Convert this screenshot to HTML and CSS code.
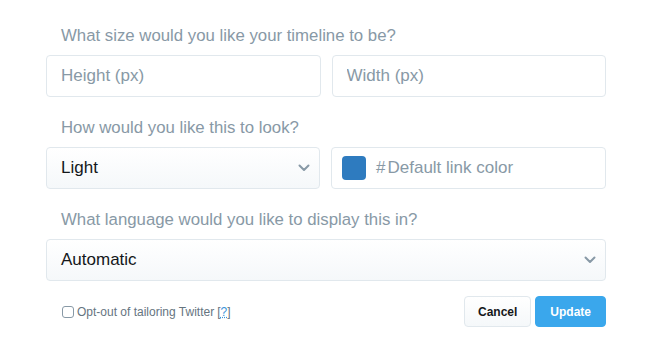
FILE: index.html
```html
<!DOCTYPE html>
<html lang="en">
<head>
    <meta charset="UTF-8">
    <title>Embed timeline options</title>
    <link rel="stylesheet" href="styles.css">
</head>
<body>
<div class="form">
    <div class="label">What size would you like your timeline to be?</div>
    <div class="row">
        <input class="field" type="text" placeholder="Height (px)"/>
        <input class="field" type="text" placeholder="Width (px)"/>
    </div>

    <div class="label">How would you like this to look?</div>
    <div class="row">
        <div class="select">
            <span>Light</span>
            <svg class="chevron" width="12" height="8" viewBox="0 0 12 8"><path d="M1.5 1.5 L6 6 L10.5 1.5" fill="none" stroke="#8899a6" stroke-width="2" stroke-linecap="round" stroke-linejoin="round"/></svg>
        </div>
        <div class="field color">
            <span class="swatch"></span>
            <span class="hash">#</span>
            <span class="ph">Default link color</span>
        </div>
    </div>

    <div class="label">What language would you like to display this in?</div>
    <div class="select wide">
        <span>Automatic</span>
        <svg class="chevron" width="12" height="8" viewBox="0 0 12 8"><path d="M1.5 1.5 L6 6 L10.5 1.5" fill="none" stroke="#8899a6" stroke-width="2" stroke-linecap="round" stroke-linejoin="round"/></svg>
    </div>

    <div class="footer">
        <label class="optout"><span class="box"></span>Opt-out of tailoring Twitter <span class="help">[<u>?</u>]</span></label>
        <div class="buttons">
            <button class="btn cancel">Cancel</button>
            <button class="btn update">Update</button>
        </div>
    </div>
</div>
</body>
</html>
```

FILE: styles.css
```css
body {
    margin: 0;
    background: #fff;
    font-family: "Liberation Sans", Arial, sans-serif;
}

.form {
    width: 560px;
    margin-left: 46px;
    padding-top: 26px;
}

.label {
    font-size: 16.8px;
    line-height: 20px;
    color: #8899a6;
    padding-left: 15px;
    margin-bottom: 9px;
}

.row {
    display: flex;
    gap: 11px;
    margin-bottom: 21px;
}

.field {
    box-sizing: border-box;
    flex: 1 1 0;
    min-width: 0;
    height: 42px;
    border: 1px solid #e1e8ed;
    border-radius: 4px;
    padding: 0 14px;
    font-family: inherit;
    font-size: 17px;
    color: #14171a;
    background: #fff;
}

.field::placeholder {
    color: #8899a6;
}

.color {
    display: flex;
    align-items: center;
    padding-left: 10px;
}

.swatch {
    width: 24px;
    height: 24px;
    border-radius: 4px;
    background: #2e7bbf;
    margin-right: 10px;
}

.hash {
    color: #8899a6;
    margin-right: 2px;
}

.ph {
    color: #8899a6;
}

.select {
    box-sizing: border-box;
    flex: 1 1 0;
    min-width: 0;
    height: 42px;
    border: 1px solid #e1e8ed;
    border-radius: 4px;
    padding: 0 9px 0 14px;
    display: flex;
    align-items: center;
    justify-content: space-between;
    font-size: 17px;
    color: #14171a;
    background: linear-gradient(#fff, #f5f8fa);
}

.select.wide {
    flex: none;
    width: 560px;
}

.footer {
    display: flex;
    justify-content: space-between;
    align-items: center;
    margin-top: 15px;
}

.optout {
    display: flex;
    align-items: center;
    font-size: 12px;
    color: #66757f;
    padding-left: 16px;
}

.box {
    box-sizing: border-box;
    width: 12px;
    height: 12px;
    border: 1px solid #8899a6;
    border-radius: 3px;
    margin-right: 3px;
    background: #fff;
}

.help {
    margin-left: 3px;
}

.help u {
    color: #3b94d9;
    text-decoration: underline dotted #3b94d9;
}

.buttons {
    display: flex;
    gap: 4px;
}

.btn {
    box-sizing: border-box;
    height: 31px;
    border-radius: 4px;
    font-family: inherit;
    font-size: 12px;
    font-weight: bold;
    padding: 0 13px;
}

.cancel {
    border: 1px solid #e1e8ed;
    background: linear-gradient(#fff, #f5f8fa);
    color: #14171a;
}

.update {
    border: 1px solid #3aa7ec;
    background: #3aa7ec;
    color: #fff;
    padding: 0 14px;
}
```
